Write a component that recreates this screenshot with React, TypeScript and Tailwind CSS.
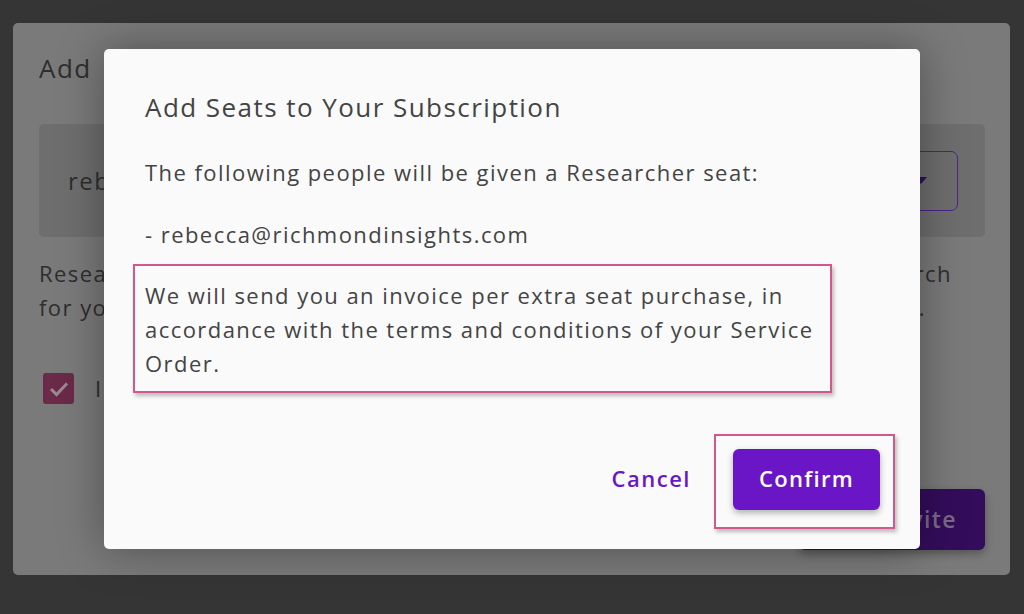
import React from "react";

export default function App() {
  const font = { fontFamily: '"Open Sans", "Noto Sans", sans-serif' };
  return (
    <div
      className="relative w-[1024px] h-[614px] overflow-hidden bg-[#353535] pt-[23px] pl-[13px] tracking-[1.45px]"
      style={font}
    >
      {/* underlying dimmed modal */}
      <div className="w-[997px] h-[552px] rounded-[5px] bg-[#7a7a7a] pl-[26px] pr-[25px] pt-[27px] text-[#2e2e2e]">
        <div className="text-[26px] leading-[36px]">Add</div>
        <div className="mt-[38px] h-[113px] rounded-[5px] bg-[#6e6e6e] flex items-center pl-[29px] pr-[27px]">
          <div className="flex-1 text-[24px]">reb</div>
          <div className="w-[150px] h-[60px] rounded-[7px] border border-[#4b2486] flex items-center justify-end pr-[30px]">
            <svg width="12" height="7" viewBox="0 0 12 7">
              <path d="M0 0 H12 L6 7 Z" fill="#2e0f63" />
            </svg>
          </div>
        </div>
        <div className="mt-[19px] text-[22px] leading-[34px] flex justify-between pr-[33px]">
          <div>
            <div>Resea</div>
            <div>for yo</div>
          </div>
          <div className="text-right">
            <div>rch</div>
            <div className="pr-[26px]">.</div>
          </div>
        </div>
        <div className="mt-[48px] flex items-center gap-[21px] ml-[4px]">
          <div className="w-[31px] h-[31px] rounded-[3px] bg-[#6a2a48] flex items-center justify-center">
            <svg width="20" height="16" viewBox="0 0 20 16">
              <path d="M2 8 L7.5 13.5 L18 2.5" stroke="#9a8a90" strokeWidth="3" fill="none" />
            </svg>
          </div>
          <div className="text-[22px]">I</div>
        </div>
        <div className="mt-[84px] flex justify-end">
          <div className="w-[186px] h-[61px] rounded-[6px] bg-[#330c5b] flex items-center justify-end pr-[28px] text-[23px] font-semibold text-[#7a6a86] shadow-[0_4px_8px_rgba(0,0,0,0.3)]">
            vite
          </div>
        </div>
      </div>

      {/* foreground modal */}
      <div className="absolute left-[104px] top-[49px] w-[816px] h-[500px] rounded-[5px] bg-[#fafafa] shadow-[0_0_45px_rgba(0,0,0,0.35)] pl-[41px] pr-[40px] pt-[40px] text-[#444444]">
        <div className="text-[26px] leading-[36px]">Add Seats to Your Subscription</div>
        <div className="mt-[30px] text-[22px] leading-[34px]">
          The following people will be given a Researcher seat:
        </div>
        <div className="mt-[28px] text-[22px] leading-[34px]">
          - rebecca@richmondinsights.com
        </div>
        <div className="mt-[13px] -ml-[12px] w-[699px] border-2 border-[#d2578b] shadow-[2px_3px_4px_rgba(0,0,0,0.25)] pl-[10px] pr-[6px] pt-[12px] pb-[11px] text-[22px] leading-[34px]">
          We will send you an invoice per extra seat purchase, in accordance
          with the terms and conditions of your Service Order.
        </div>
        <div className="mt-[41px] -mr-[15px] flex justify-end items-center">
          <div className="text-[22px] font-semibold text-[#6a16c6] mr-[23px] mb-[6px] tracking-[1.5px]">Cancel</div>
          <div className="border-2 border-[#d2578b] shadow-[2px_3px_4px_rgba(0,0,0,0.25)] pl-[17px] pr-[13px] pt-[13px] pb-[17px]">
            <div className="w-[147px] h-[61px] rounded-[6px] bg-[#6a16c6] flex items-center justify-center pb-[3px] text-white text-[22px] font-semibold tracking-[1.3px] shadow-[0_3px_6px_rgba(0,0,0,0.3)]">
              Confirm
            </div>
          </div>
        </div>
      </div>
    </div>
  );
}
